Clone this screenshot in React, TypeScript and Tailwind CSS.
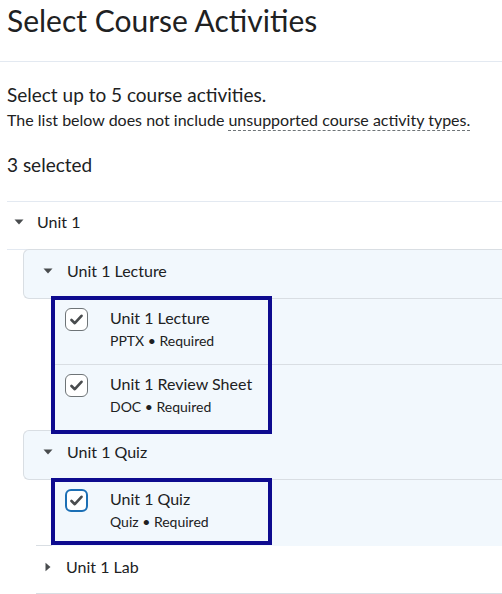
import React from "react";

type Item = { title: string; meta: string; focused?: boolean };

const CaretDown = ({ className }: { className?: string }) => (
  <svg width="10" height="6" viewBox="0 0 10 6" className={className}>
    <path d="M0.5 0.5h9L5 5.5z" fill="#494c4e" />
  </svg>
);

const CaretRight = ({ className }: { className?: string }) => (
  <svg width="6" height="10" viewBox="0 0 6 10" className={className}>
    <path d="M0.5 0.8v8.4L5.5 5z" fill="#494c4e" />
  </svg>
);

function Checkbox({ focused }: { focused?: boolean }) {
  return (
    <div
      className={`w-[23px] h-[23px] rounded-[6px] bg-white flex items-center justify-center shrink-0 ${
        focused ? "border-2 border-[#1b6fb5]" : "border-[1.5px] border-[#6e7477]"
      }`}
    >
      <svg width="13" height="11" viewBox="0 0 13 11">
        <path
          d="M1.5 6l3.3 3.2L11.5 1.8"
          fill="none"
          stroke="#494c4e"
          strokeWidth="2.6"
          strokeLinecap="round"
          strokeLinejoin="round"
        />
      </svg>
    </div>
  );
}

function ItemRow({ item, last }: { item: Item; last?: boolean }) {
  return (
    <div
      className={`h-[66px] flex items-start bg-[#f2f8fd] pl-[13px] ${
        last ? "" : "border-b border-[#d9dee3]"
      }`}
    >
      <div className="pt-[9px]">
        <Checkbox focused={item.focused} />
      </div>
      <div className="ml-[22px] pt-[8px]">
        <div className="text-[16px] leading-[22px] text-[#202122]">{item.title}</div>
        <div className="text-[14px] leading-[20px] mt-[2px] text-[#202122]">{item.meta}</div>
      </div>
    </div>
  );
}

function Group({
  title,
  items,
  boxClass,
}: {
  title: string;
  items: Item[];
  boxClass: string;
}) {
  return (
    <>
      <div className="-mt-px ml-[16px] h-[50px] pb-[7px] flex items-center bg-[#f2f8fd] border border-r-0 border-[#d9dee3] rounded-l-[6px]">
        <CaretDown className="ml-[19px]" />
        <span className="ml-[14px] text-[16px] text-[#202122]">{title}</span>
      </div>
      <div className="relative ml-[45px]">
        {items.map((it, i) => (
          <ItemRow key={it.title} item={it} last={i === items.length - 1} />
        ))}
        {/* highlight annotation */}
        <div
          className={`absolute z-10 -left-[1px] w-[221px] border-[4.5px] border-[#0e0b8f] pointer-events-none ${boxClass}`}
        />
      </div>
    </>
  );
}

export default function App() {
  return (
    <div
      className="w-[502px] h-[594px] overflow-hidden bg-white text-[#202122]"
      style={{ fontFamily: "Lato, 'Noto Sans', sans-serif" }}
    >
      <h1 className="px-[7px] pt-[1px] h-[62px] text-[30px] leading-[38px] font-normal text-[#202122] border-b border-[#e3e9f1]">
        Select Course Activities
      </h1>

      <div className="px-[7px] pt-[20px]">
        <p className="text-[19px] leading-[26px]">Select up to 5 course activities.</p>
        <p className="text-[16px] leading-[22px] mt-[1px]">
          The list below does not include{" "}
          <span className="underline decoration-dashed decoration-1 underline-offset-[4px] decoration-[#6e7477]">
            unsupported course activity types.
          </span>
        </p>
        <p className="text-[19px] leading-[26px] mt-[21px]">3 selected</p>
      </div>

      <div className="ml-[7px] mt-[23px] border-t border-[#e3e9f1]">
        <div className="h-[48px] pb-[7px] flex items-center border-b border-[#e3e9f1]">
          <CaretDown className="ml-[7px]" />
          <span className="ml-[13px] text-[16px]">Unit 1</span>
        </div>

        <Group
          title="Unit 1 Lecture"
          boxClass="-top-[3px] -bottom-[3px]"
          items={[
            { title: "Unit 1 Lecture", meta: "PPTX • Required" },
            { title: "Unit 1 Review Sheet", meta: "DOC • Required" },
          ]}
        />
        <Group
          title="Unit 1 Quiz"
          boxClass="-top-[2px] bottom-[1px]"
          items={[{ title: "Unit 1 Quiz", meta: "Quiz • Required", focused: true }]}
        />

        <div className="-mt-px ml-[29px] h-[49px] pb-[5px] flex items-center border-t border-b border-[#d9dee3]">
          <CaretRight className="ml-[9px]" />
          <span className="ml-[15px] text-[16px]">Unit 1 Lab</span>
        </div>
      </div>
    </div>
  );
}
